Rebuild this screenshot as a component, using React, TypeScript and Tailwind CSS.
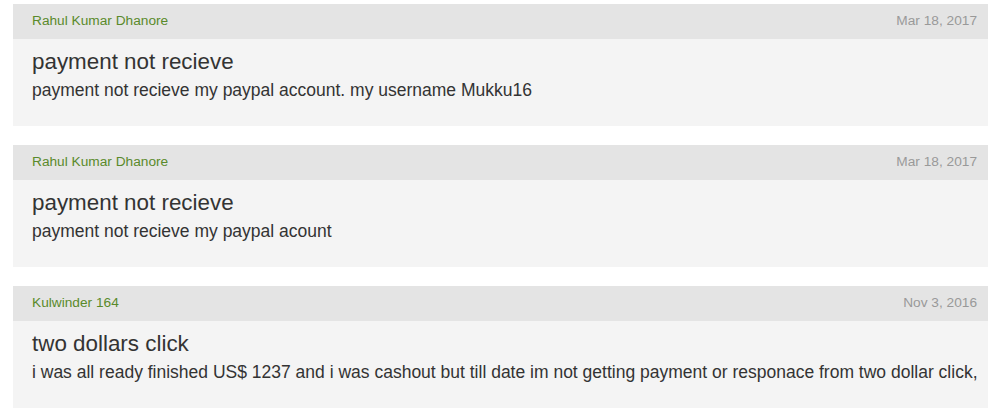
type Post = {
  id: number;
  author: string;
  date: string;
  title: string;
  body: string;
};

const posts: Post[] = [
  {
    id: 1,
    author: "Rahul Kumar Dhanore",
    date: "Mar 18, 2017",
    title: "payment not recieve",
    body: "payment not recieve my paypal account. my username Mukku16",
  },
  {
    id: 2,
    author: "Rahul Kumar Dhanore",
    date: "Mar 18, 2017",
    title: "payment not recieve",
    body: "payment not recieve my paypal acount",
  },
  {
    id: 3,
    author: "Kulwinder 164",
    date: "Nov 3, 2016",
    title: "two dollars click",
    body: "i was all ready finished US$ 1237 and i was cashout but till date im not getting payment or responace from two dollar click,",
  },
];

export default function App() {
  return (
    <div
      className="min-h-screen bg-white pt-[4px] pl-[13px] pr-[12px] flex flex-col gap-[19px]"
      style={{ fontFamily: '"Liberation Sans", Arial, sans-serif' }}
    >
      {posts.map(p => (
        <div key={p.id} className="flex flex-col">
          <div className="h-[35px] bg-[#e4e4e4] flex items-center justify-between pl-[19px] pr-[11px] text-[13.7px]">
            <span className="text-[#5a8a2b]">{p.author}</span>
            <span className="text-[#999999]">{p.date}</span>
          </div>
          <div className="h-[87px] bg-[#f4f4f4] pl-[19px] pt-[8px] text-[#333333]">
            <div className="text-[22.4px] leading-[29px]">{p.title}</div>
            <div className="text-[17.5px] leading-[29px] whitespace-nowrap">{p.body}</div>
          </div>
        </div>
      ))}
    </div>
  );
}
